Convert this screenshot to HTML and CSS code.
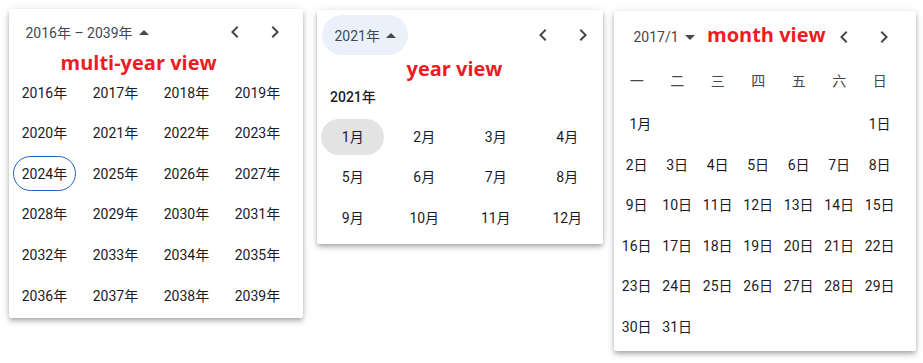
FILE: index.html
```html
<html>
<head>
	<link rel="stylesheet" href="styles.css">
</head>
<body>
	<div class="board">
		<div class="card card-multi">
			<div class="head">
				<span class="period">2016年 – 2039年<svg class="caret" viewBox="0 0 10 5"><polygon points="0,5 5,0 10,5" /></svg></span>
				<span class="spacer"></span>
				<span class="nav"><svg viewBox="0 0 24 24"><path d="M15.41 7.41L14 6l-6 6 6 6 1.41-1.41L10.83 12z" /></svg></span>
				<span class="nav"><svg viewBox="0 0 24 24"><path d="M10 6L8.59 7.41 13.17 12l-4.58 4.59L10 18l6-6z" /></svg></span>
			</div>
			<div class="years">
				<div class="cell"><span class="pill">2016年</span></div>
				<div class="cell"><span class="pill">2017年</span></div>
				<div class="cell"><span class="pill">2018年</span></div>
				<div class="cell"><span class="pill">2019年</span></div>
				<div class="cell"><span class="pill">2020年</span></div>
				<div class="cell"><span class="pill">2021年</span></div>
				<div class="cell"><span class="pill">2022年</span></div>
				<div class="cell"><span class="pill">2023年</span></div>
				<div class="cell"><span class="pill today">2024年</span></div>
				<div class="cell"><span class="pill">2025年</span></div>
				<div class="cell"><span class="pill">2026年</span></div>
				<div class="cell"><span class="pill">2027年</span></div>
				<div class="cell"><span class="pill">2028年</span></div>
				<div class="cell"><span class="pill">2029年</span></div>
				<div class="cell"><span class="pill">2030年</span></div>
				<div class="cell"><span class="pill">2031年</span></div>
				<div class="cell"><span class="pill">2032年</span></div>
				<div class="cell"><span class="pill">2033年</span></div>
				<div class="cell"><span class="pill">2034年</span></div>
				<div class="cell"><span class="pill">2035年</span></div>
				<div class="cell"><span class="pill">2036年</span></div>
				<div class="cell"><span class="pill">2037年</span></div>
				<div class="cell"><span class="pill">2038年</span></div>
				<div class="cell"><span class="pill">2039年</span></div>
			</div>
			<div class="note note-multi">multi-year view</div>
		</div>

		<div class="card card-year">
			<div class="head">
				<span class="period period-open">2021年<svg class="caret" viewBox="0 0 10 5"><polygon points="0,5 5,0 10,5" /></svg></span>
				<span class="spacer"></span>
				<span class="nav"><svg viewBox="0 0 24 24"><path d="M15.41 7.41L14 6l-6 6 6 6 1.41-1.41L10.83 12z" /></svg></span>
				<span class="nav"><svg viewBox="0 0 24 24"><path d="M10 6L8.59 7.41 13.17 12l-4.58 4.59L10 18l6-6z" /></svg></span>
			</div>
			<div class="row-label">2021年</div>
			<div class="months">
				<div class="cell"><span class="pill picked">1月</span></div>
				<div class="cell"><span class="pill">2月</span></div>
				<div class="cell"><span class="pill">3月</span></div>
				<div class="cell"><span class="pill">4月</span></div>
				<div class="cell"><span class="pill">5月</span></div>
				<div class="cell"><span class="pill">6月</span></div>
				<div class="cell"><span class="pill">7月</span></div>
				<div class="cell"><span class="pill">8月</span></div>
				<div class="cell"><span class="pill">9月</span></div>
				<div class="cell"><span class="pill">10月</span></div>
				<div class="cell"><span class="pill">11月</span></div>
				<div class="cell"><span class="pill">12月</span></div>
			</div>
			<div class="note note-year">year view</div>
		</div>

		<div class="card card-month">
			<div class="head">
				<span class="period">2017/1<svg class="caret" viewBox="0 0 10 5"><polygon points="0,0 5,5 10,0" /></svg></span>
				<span class="spacer"></span>
				<span class="nav"><svg viewBox="0 0 24 24"><path d="M15.41 7.41L14 6l-6 6 6 6 1.41-1.41L10.83 12z" /></svg></span>
				<span class="nav"><svg viewBox="0 0 24 24"><path d="M10 6L8.59 7.41 13.17 12l-4.58 4.59L10 18l6-6z" /></svg></span>
			</div>
			<div class="weekdays">
				<span>一</span><span>二</span><span>三</span><span>四</span><span>五</span><span>六</span><span>日</span>
			</div>
			<div class="days">
				<div class="month-label">1月</div>
				<div class="day">1日</div>
				<div class="day">2日</div>
				<div class="day">3日</div>
				<div class="day">4日</div>
				<div class="day">5日</div>
				<div class="day">6日</div>
				<div class="day">7日</div>
				<div class="day">8日</div>
				<div class="day">9日</div>
				<div class="day">10日</div>
				<div class="day">11日</div>
				<div class="day">12日</div>
				<div class="day">13日</div>
				<div class="day">14日</div>
				<div class="day">15日</div>
				<div class="day">16日</div>
				<div class="day">17日</div>
				<div class="day">18日</div>
				<div class="day">19日</div>
				<div class="day">20日</div>
				<div class="day">21日</div>
				<div class="day">22日</div>
				<div class="day">23日</div>
				<div class="day">24日</div>
				<div class="day">25日</div>
				<div class="day">26日</div>
				<div class="day">27日</div>
				<div class="day">28日</div>
				<div class="day">29日</div>
				<div class="day">30日</div>
				<div class="day">31日</div>
			</div>
			<div class="note note-month">month view</div>
		</div>
	</div>
</body>
</html>
```

FILE: styles.css
```css
body {
	margin: 0;
	background: #fff;
	font-family: Roboto, "Noto Sans CJK SC", sans-serif;
	font-size: 14px;
	color: #1b1b1f;
}

.board {
	display: flex;
	align-items: flex-start;
}

.card {
	position: relative;
	box-sizing: border-box;
	background: #fff;
	border-radius: 2px;
	box-shadow: 0 2px 4px -1px rgba(0,0,0,.2), 0 4px 5px 0 rgba(0,0,0,.14), 0 1px 10px 0 rgba(0,0,0,.12);
}
.card-multi {
	margin: 9px 0 0 9px;
	width: 294px;
	height: 309px;
}
.card-year {
	margin: 10px 0 0 14px;
	width: 286px;
	height: 234px;
}
.card-month {
	margin: 11px 0 0 11px;
	width: 302px;
	height: 340px;
}

/* header: period button, arrows */
.head {
	display: flex;
	align-items: center;
	height: 40px;
	color: #44474e;
}
.card-multi .head {
	margin-top: 3px;
	padding: 0 8px 0 16.5px;
}
.card-year .head {
	margin-top: 5px;
	padding: 0 0 0 5px;
}
.card-month .head {
	margin-top: 6px;
	padding: 0 12.5px 0 19.5px;
}
.period {
	display: flex;
	align-items: center;
	height: 40px;
	white-space: nowrap;
}
.period-open {
	box-sizing: border-box;
	width: 86px;
	padding-left: 12.5px;
	border-radius: 20px;
	background: #eaf1fb;
}
.caret {
	width: 10px;
	height: 5px;
	margin-left: 6px;
	fill: #44474e;
}
.spacer {
	flex: 1;
}
.nav {
	display: flex;
	align-items: center;
	justify-content: center;
	width: 40px;
	height: 40px;
}
.nav svg {
	width: 24px;
	height: 24px;
	fill: #44474e;
}

/* year and month grids */
.years {
	display: grid;
	grid-template-columns: repeat(4, 71px);
	grid-auto-rows: 40.6px;
	margin-top: 20.3px;
}
.months {
	display: grid;
	grid-template-columns: repeat(4, 71.5px);
	grid-auto-rows: 40.5px;
}
.cell {
	display: flex;
	align-items: center;
	justify-content: center;
}
.pill {
	box-sizing: border-box;
	display: flex;
	align-items: center;
	justify-content: center;
	width: 63px;
	height: 35px;
	padding-bottom: 2px;
	border-radius: 18px;
	white-space: nowrap;
}
.months .pill {
	height: 36px;
}
.today {
	border: 1px solid #1f63b8;
}
.picked {
	background: #e3e3e3;
}
.row-label {
	display: flex;
	align-items: center;
	height: 40.5px;
	margin-top: 20.75px;
	padding-left: 13px;
	padding-bottom: 1px;
	box-sizing: border-box;
	font-weight: 500;
}

/* month view */
.weekdays {
	display: grid;
	grid-template-columns: repeat(7, 40.5px);
	height: 24px;
	align-items: center;
	margin-top: 11px;
	margin-bottom: 1px;
	padding-left: 2.4px;
	color: #44474e;
	text-align: center;
}
.days {
	display: grid;
	grid-template-columns: repeat(7, 40.5px);
	grid-auto-rows: 40.5px;
	margin-top: 11.75px;
	padding-left: 2.4px;
}
.day {
	display: flex;
	align-items: center;
	justify-content: center;
	padding-bottom: 2px;
	white-space: nowrap;
}
.month-label {
	grid-column: span 6;
	display: flex;
	align-items: center;
	padding: 0 0 2px 13px;
}

/* red annotations laid over the screenshot */
.note {
	position: absolute;
	font-family: "Open Sans", sans-serif;
	font-weight: 700;
	font-size: 20px;
	line-height: 28px;
	color: #ed1c24;
	white-space: nowrap;
}
.note-multi {
	left: 51.5px;
	top: 40px;
}
.note-year {
	left: 89.5px;
	top: 45px;
}
.note-month {
	left: 93px;
	top: 10px;
}
```
